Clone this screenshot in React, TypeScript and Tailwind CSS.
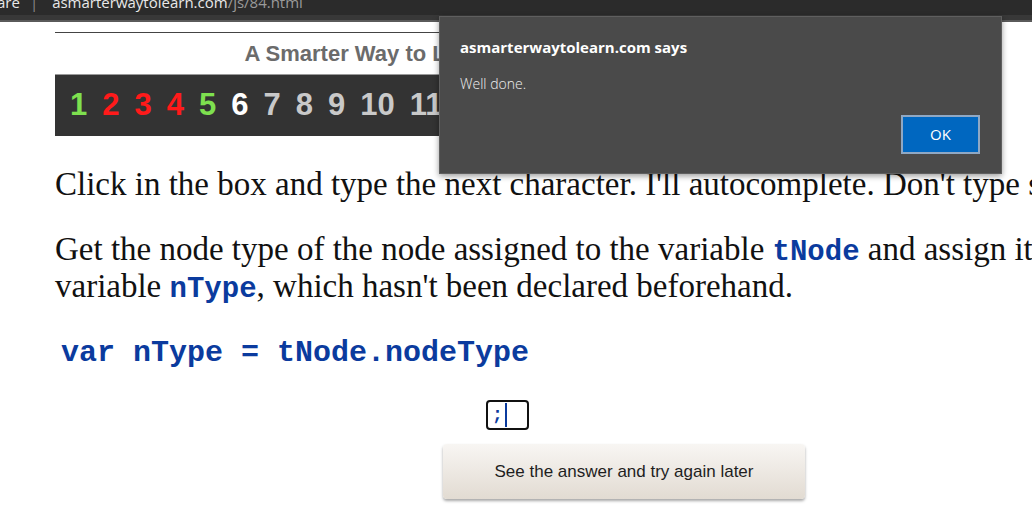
import React from "react";

const nums = [
  { n: "1", c: "text-[#7ee04f]" },
  { n: "2", c: "text-[#ff1a1a]" },
  { n: "3", c: "text-[#ff1a1a]" },
  { n: "4", c: "text-[#ff1a1a]" },
  { n: "5", c: "text-[#7ee04f]" },
  { n: "6", c: "text-white" },
  { n: "7", c: "text-[#c9c9c9]" },
  { n: "8", c: "text-[#c9c9c9]" },
  { n: "9", c: "text-[#c9c9c9]" },
  { n: "10", c: "text-[#c9c9c9]" },
  { n: "11", c: "text-[#c9c9c9]" },
  { n: "12", c: "text-[#c9c9c9]" },
  { n: "13", c: "text-[#c9c9c9]" },
  { n: "14", c: "text-[#c9c9c9]" },
  { n: "15", c: "text-[#c9c9c9]" },
];

function Code({ children }: { children: React.ReactNode }) {
  return (
    <span className="font-['Liberation_Mono',monospace] text-[29px] font-bold leading-none text-[#0b3b9e]">
      {children}
    </span>
  );
}

export default function App() {
  return (
    <div className="relative h-[517px] w-[1032px] overflow-hidden bg-white">
      {/* browser chrome */}
      <div className="h-[15px] overflow-hidden bg-[#2b2b2b] font-['Open_Sans',sans-serif] text-[15px] leading-[15px]">
        <div className="-mt-[5px] flex whitespace-nowrap">
          <span className="-ml-[3px] text-[#e8e8e8]">are</span>
          <span className="ml-[10px] text-[#8a8a8a]">|</span>
          <span className="ml-[14px] text-[#e8e8e8]">asmarterwaytolearn.com</span>
          <span className="text-[#9a9a9a]">/js/84.html</span>
        </div>
      </div>
      <div className="h-[5px] bg-[#383838]" />
      <div className="h-[2px] bg-[#5a5a5a]" />

      <div className="pl-[55px] pt-[10px]">
        {/* banner */}
        <div className="w-[736px] border-t border-[#444]">
          <div className="flex h-[42px] items-center justify-center border-b border-[#9a9a9a] bg-white font-['Liberation_Sans',sans-serif] text-[22px] font-bold text-[#6b6b6b]">
            <span className="ml-[8px]">A Smarter Way to Learn JavaScript</span>
          </div>
          <div className="flex h-[61px] items-center gap-[15px] bg-[#333333] pl-[15px] font-['Liberation_Sans',sans-serif] text-[31px] font-bold">
            {nums.map((x) => (
              <span key={x.n} className={x.c}>
                {x.n}
              </span>
            ))}
          </div>
        </div>

        {/* instructions */}
        <div className="font-['Liberation_Serif',serif] text-[33px] leading-[37px] text-[#111]">
          <p className="mt-[30px] whitespace-nowrap">
            Click in the box and type the next character. I'll autocomplete. Don't type spaces.
          </p>
          <p className="mt-[28px] w-[1100px]">
            Get the node type of the node assigned to the variable <Code>tNode</Code> and assign it to the
            variable <Code>nType</Code>, which hasn't been declared beforehand.
          </p>
        </div>

        <div className="mt-[30px] pl-[6px] font-['Liberation_Mono',monospace] text-[30px] font-bold leading-[37px] text-[#0b3b9e] whitespace-pre">
          var nType = tNode.nodeType
        </div>

        <div className="mt-[28px] pl-[431px]">
          <div className="flex h-[30px] w-[43px] items-center rounded-[4px] border-2 border-[#111] pl-[4px]">
            <span className="font-['Liberation_Mono',monospace] text-[18px] font-bold leading-none text-[#0b3b9e]">;</span>
            <span className="ml-[2px] h-[24px] w-[2px] bg-[#0b3b9e]" />
          </div>
        </div>

        <div className="mt-[14px] pl-[388px]">
          <button className="flex h-[55px] w-[362px] items-center justify-center rounded-[4px] bg-gradient-to-b from-[#f8f6f3] to-[#e2dbd2] font-['Liberation_Sans',sans-serif] text-[17px] text-[#1e1e1e] shadow-[0_2px_3px_rgba(0,0,0,0.35)]">
            See the answer and try again later
          </button>
        </div>
      </div>

      {/* alert dialog */}
      <div className="absolute left-[439px] top-[16px] h-[158px] w-[563px] border border-[#5f5f5f] bg-[#4a4a4a] font-['Open_Sans',sans-serif] shadow-[0_2px_6px_rgba(0,0,0,0.4)]">
        <div className="pl-[20px] pt-[19px] text-[15px] font-bold text-white">
          asmarterwaytolearn.com says
        </div>
        <div className="pl-[20px] pt-[14px] text-[14px] font-light text-[#f0f0f0]">Well done.</div>
        <div className="absolute right-[21px] top-[98px] flex h-[39px] w-[79px] items-center justify-center border-2 border-[#8fa8c4] bg-[#0067c0] text-[15px] text-white">
          OK
        </div>
      </div>
    </div>
  );
}
